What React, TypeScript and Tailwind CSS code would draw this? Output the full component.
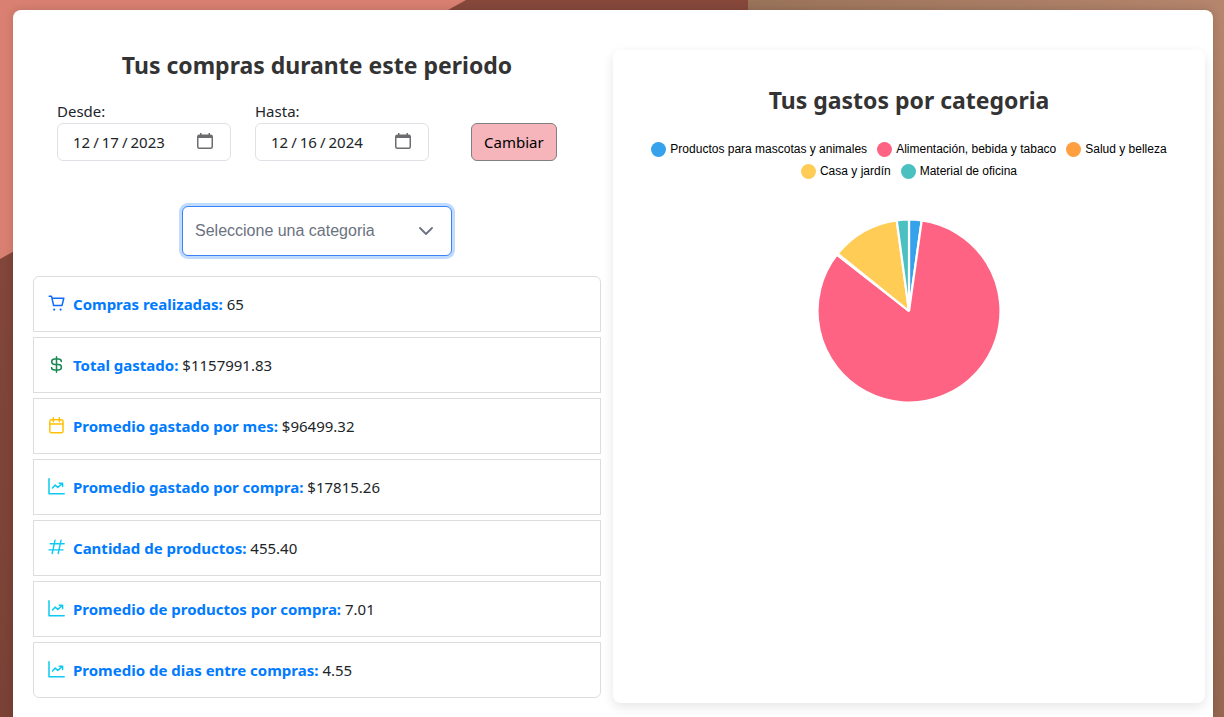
import React from "react";

type IconProps = { className?: string };

const iconBase = {
  width: 17,
  height: 17,
  viewBox: "0 0 17 17",
  fill: "none",
  stroke: "currentColor",
  strokeWidth: 1.5,
  strokeLinecap: "round" as const,
  strokeLinejoin: "round" as const,
  "aria-hidden": true,
};

function CartIcon({ className }: IconProps) {
  return (
    <svg {...iconBase} className={className}>
      <path d="M1.2 1.2h2.300l2.100 9.300h8.400l1.800-7.200H4" />
      <circle cx="6.200" cy="14.600" r="1.100" fill="currentColor" stroke="none" />
      <circle cx="12.600" cy="14.600" r="1.100" fill="currentColor" stroke="none" />
    </svg>
  );
}

function DollarIcon({ className }: IconProps) {
  return (
    <svg {...iconBase} className={className}>
      <path d="M8.500 .8v15.400M13.300 5.600c0-1.500-1.400-2.500-3.100-2.500H6.900c-1.800 0-3.200 1.100-3.200 2.700s1.400 2.700 3.200 2.700h3.300c1.800 0 3.200 1.100 3.200 2.700s-1.400 2.700-3.200 2.700H6.700c-1.700 0-3.100-1-3.100-2.500" />
    </svg>
  );
}

function CalendarIcon({ className }: IconProps) {
  return (
    <svg {...iconBase} className={className}>
      <rect x="1.800" y="2.800" width="13.200" height="13" rx="1.600" />
      <path d="M1.800 7H15M5.400 .8v4M11.400 .8v4" />
    </svg>
  );
}

function ChartIcon({ className }: IconProps) {
  return (
    <svg {...iconBase} className={className}>
      <path d="M1 .8v15h15.200M4.500 10l2.700-3 2.600 2.500 4.500-4.100M11.300 5.300h3.300v3.300" />
    </svg>
  );
}

function HashIcon({ className }: IconProps) {
  return (
    <svg {...iconBase} strokeWidth={1.4} className={className}>
      <path d="M2.200 4.800h14M1 10.900h14M7 1.300L4.200 14.500M13 1.300L10.200 14.500" />
    </svg>
  );
}

const stats = [
  { label: "Compras realizadas:", value: "65", Icon: CartIcon, color: "text-[#0d6efd]" },
  { label: "Total gastado:", value: "$1157991.83", Icon: DollarIcon, color: "text-[#198754]" },
  { label: "Promedio gastado por mes:", value: "$96499.32", Icon: CalendarIcon, color: "text-[#ffc107]" },
  { label: "Promedio gastado por compra:", value: "$17815.26", Icon: ChartIcon, color: "text-[#0dcaf0]" },
  { label: "Cantidad de productos:", value: "455.40", Icon: HashIcon, color: "text-[#0dcaf0]" },
  { label: "Promedio de productos por compra:", value: "7.01", Icon: ChartIcon, color: "text-[#0dcaf0]" },
  { label: "Promedio de dias entre compras:", value: "4.55", Icon: ChartIcon, color: "text-[#0dcaf0]" },
];

const categories = [
  { name: "Productos para mascotas y animales", dot: "bg-[#36a2eb]", fill: "#36a2eb", from: 0, to: 8 },
  { name: "Alimentación, bebida y tabaco", dot: "bg-[#ff6384]", fill: "#ff6384", from: 8, to: 308 },
  { name: "Salud y belleza", dot: "bg-[#ff9f40]", fill: "#ff9f40", from: 308, to: 308.8 },
  { name: "Casa y jardín", dot: "bg-[#ffcd56]", fill: "#ffcd56", from: 308.8, to: 352.3 },
  { name: "Material de oficina", dot: "bg-[#4bc0c0]", fill: "#4bc0c0", from: 352.3, to: 360 },
];

function slicePath(from: number, to: number, r: number) {
  const point = (deg: number) => {
    const a = (deg * Math.PI) / 180;
    return `${(r * Math.sin(a)).toFixed(2)} ${(-r * Math.cos(a)).toFixed(2)}`;
  };
  return `M0 0L${point(from)}A${r} ${r} 0 ${to - from > 180 ? 1 : 0} 1 ${point(to)}Z`;
}

function PieChart() {
  return (
    <svg viewBox="-93 -93 186 186" className="mx-auto mt-9 block w-[186px]" role="img" aria-label="Tus gastos por categoria">
      {categories.map((c) => (
        <path key={c.name} d={slicePath(c.from, c.to, 91.5)} fill={c.fill} stroke="#fff" strokeWidth="2.200" strokeLinejoin="bevel" />
      ))}
    </svg>
  );
}

function DateField({ id, label, value }: { id: string; label: string; value: string }) {
  return (
    <div className="w-[174px]">
      <label htmlFor={id} className="block leading-6">
        {label}
      </label>
      <div className="relative">
        <input
          id={id}
          type="date"
          defaultValue={value}
          className="block h-[38px] w-full rounded-md border border-[#dee2e6] bg-white pr-3 pl-[14px] outline-none [&::-webkit-calendar-picker-indicator]:opacity-0 [&::-webkit-datetime-edit-text]:px-0.5"
        />
        <svg viewBox="0 0 16 16" className="pointer-events-none absolute top-[10px] right-[18px] size-4" aria-hidden="true">
          <rect x=".75" y="2.200" width="14.500" height="13" rx="1.500" fill="none" stroke="#6c6d70" strokeWidth="1.500" />
          <path d="M1 2h14v3H1zM3 0h1.500v2H3zM11.500 0H13v2h-1.500z" fill="#6c6d70" />
        </svg>
      </div>
    </div>
  );
}

function Backdrop() {
  return (
    <svg className="absolute inset-0 -z-10 size-full" viewBox="0 0 1224 717" preserveAspectRatio="none" aria-hidden="true">
      <defs>
        <linearGradient id="maroon" x1="0" y1="0" x2="0" y2="1">
          <stop offset="0" stopColor="#87483c" />
          <stop offset="1" stopColor="#7a4236" />
        </linearGradient>
        <linearGradient id="tan" x1="0" y1="0" x2="1" y2="0">
          <stop offset="0" stopColor="#9a735b" />
          <stop offset="1" stopColor="#b5866c" />
        </linearGradient>
        <linearGradient id="shade" x1="0" y1="0" x2="0" y2="1">
          <stop offset="0" stopColor="#5a2e20" stopOpacity="0" />
          <stop offset="1" stopColor="#5a2e20" stopOpacity=".35" />
        </linearGradient>
      </defs>
      <rect width="1224" height="717" fill="url(#maroon)" />
      <path d="M0 0H466L0 259Z" fill="#d98072" />
      <path d="M748 0H1224V717H748Z" fill="url(#tan)" />
      <path d="M748 0H1224V717H748Z" fill="url(#shade)" />
    </svg>
  );
}

export default function App() {
  return (
    <div className="relative isolate flex min-h-screen pt-[10px] pr-[11px] pl-[13px] font-['Noto_Sans',sans-serif] text-[15px] text-[#212529]">
      <Backdrop />
      <main className="grid flex-1 grid-cols-[568fr_592fr] items-start gap-3 rounded-t-lg bg-white pt-10 pr-2 pb-3.5 pl-5 shadow-[0_0_10px_rgba(0,0,0,0.15)]">
        <section>
          <h2 className="text-center text-[23px] leading-[30px] font-bold text-[#333]">Tus compras durante este periodo</h2>
          <form className="mt-[19px] flex items-end gap-6 pl-6" onSubmit={(e) => e.preventDefault()}>
            <DateField id="desde" label="Desde:" value="2023-12-17" />
            <DateField id="hasta" label="Hasta:" value="2024-12-16" />
            <button type="submit" className="ml-[18px] h-[38px] rounded-md border border-[#808080] bg-[#f5b5bb] px-3 text-black">
              Cambiar
            </button>
          </form>
          <div className="relative mx-auto mt-[45px] w-[270px]">
            <select
              aria-label="Seleccione una categoria"
              defaultValue=""
              className="block h-[50px] w-full appearance-none rounded-md border border-[#3b82f6] bg-white pr-10 pl-3 font-['Liberation_Sans',sans-serif] text-base text-[#6b7280] shadow-[0_0_0_3px_#bfdbfe] outline-none"
            >
              <option value="">Seleccione una categoria</option>
              {categories.map((c) => (
                <option key={c.name}>{c.name}</option>
              ))}
            </select>
            <svg viewBox="0 0 14 14" className="pointer-events-none absolute top-[18px] right-[19px] size-3.5" fill="none" stroke="#6b7280" strokeWidth="1.800" aria-hidden="true">
              <path d="M1 4L7 10l6-6" strokeLinecap="round" strokeLinejoin="round" />
            </svg>
          </div>
          <ul className="mt-5 flex flex-col gap-[5px]">
            {stats.map(({ label, value, Icon, color }) => (
              <li key={label} className="flex h-14 items-center border border-[#dcdddf] px-[14px] first:rounded-t-md last:rounded-b-md">
                <Icon className={`mr-2 mb-0.5 shrink-0 ${color}`} />
                <span>
                  <strong className="font-bold text-[#007bff]">{label}</strong> {value}
                </span>
              </li>
            ))}
          </ul>
        </section>
        <section className="min-h-[653px] rounded-lg bg-white px-5 pt-[35px] shadow-[0_4px_12px_rgba(0,0,0,0.1)]">
          <h2 className="text-center text-[23px] leading-[30px] font-bold text-[#333]">Tus gastos por categoria</h2>
          <ul className="mt-[23px] flex flex-wrap justify-center gap-x-2.5 font-['Liberation_Sans',sans-serif] text-xs text-black">
            {categories.map((c) => (
              <li key={c.name} className="flex h-[22px] items-center gap-1">
                <span className={`size-[15px] rounded-full ${c.dot}`} />
                {c.name}
              </li>
            ))}
          </ul>
          <PieChart />
        </section>
      </main>
    </div>
  );
}
